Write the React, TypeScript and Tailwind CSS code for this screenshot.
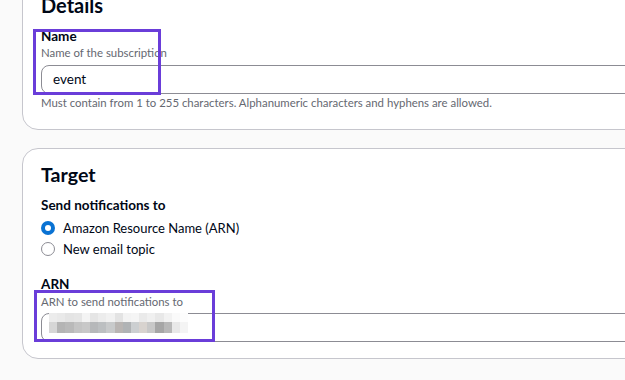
const blur: [string, string][] = [
  ["#ececec", "#d6d6d6"],
  ["#e9e9e9", "#b4b4b4"],
  ["#e4e4e4", "#b9b9b9"],
  ["#e6e6e6", "#c4c4c4"],
  ["#f4f4f4", "#c8c8c8"],
  ["#e5e5e5", "#b6b8ba"],
  ["#ececec", "#bcbfc1"],
  ["#f1f1f1", "#c8cacb"],
  ["#e3e3e3", "#b9b5b3"],
  ["#f3f3f3", "#b0b3b5"],
  ["#f5f5f5", "#cccfd1"],
  ["#eaeaea", "#d8d3cf"],
  ["#f0f0f0", "#c8c8c8"],
  ["#e8e8e8", "#a6a6a6"],
  ["#f2f2f2", "#b8b8b8"],
  ["#fafafa", "#e8e8e8"],
  ["#fdfdfd", "#f4f4f4"],
];

function Radio({ checked, label }: { checked?: boolean; label: string }) {
  return (
    <div className="flex items-center h-[20px]">
      {checked ? (
        <span className="w-[14px] h-[14px] rounded-full bg-[#0972d3] flex items-center justify-center">
          <span className="w-[6px] h-[6px] rounded-full bg-white" />
        </span>
      ) : (
        <span className="w-[14px] h-[14px] rounded-full border-[1.5px] border-[#8c8c94] bg-white" />
      )}
      <span className="ml-[8px] text-[13px] leading-[20px] text-[#000716]">{label}</span>
    </div>
  );
}

export default function App() {
  return (
    <div className="w-[625px] h-[380px] overflow-hidden bg-[#fafafa] font-['Lato',sans-serif]">
      <div className="pl-[22px] mt-[-30px] flex flex-col">
        {/* Details card */}
        <div className="relative w-[720px] bg-white border border-[#c6c6cd] rounded-[16px] pl-[18px] pt-[22px] pb-[18px]">
          <h2 className="text-[20px] leading-[24px] font-bold text-[#000716]">Details</h2>
          <div className="mt-[11px] text-[13.5px] leading-[16px] font-bold text-[#000716]">Name</div>
          <div className="mt-[1px] text-[11.4px] leading-[16px] text-[#656871]">Name of the subscription</div>
          <div className="mt-[4px] h-[29px] border border-[#8c8c94] rounded-[8px] flex items-center pl-[11px] pb-[2px]">
            <span className="text-[13.5px] leading-[20px] text-[#000716]">event</span>
          </div>
          <div className="mt-[1px] text-[11.4px] leading-[16px] text-[#656871]">
            Must contain from 1 to 255 characters. Alphanumeric characters and hyphens are allowed.
          </div>
          <div className="absolute left-[10px] top-[58px] w-[128px] h-[66px] border-[3px] border-[#6a3dd9]" />
        </div>

        {/* Target card */}
        <div className="relative mt-[18px] w-[720px] bg-white border border-[#c6c6cd] rounded-[16px] pl-[18px] pt-[14px] pb-[16px]">
          <h2 className="text-[19.6px] leading-[24px] font-bold text-[#000716]">Target</h2>
          <div className="mt-[10px] text-[13.5px] leading-[16px] font-bold text-[#000716]">Send notifications to</div>
          <div className="mt-[5px] flex flex-col gap-[1px]">
            <Radio checked label="Amazon Resource Name (ARN)" />
            <Radio label="New email topic" />
          </div>
          <div className="mt-[17px] text-[13.5px] leading-[16px] font-bold text-[#000716]">ARN</div>
          <div className="mt-[2px] text-[11.4px] leading-[16px] text-[#656871]">ARN to send notifications to</div>
          <div className="relative mt-[3px] h-[29px] border border-[#8c8c94] rounded-[8px]">
            <div className="absolute left-[7px] top-[-1px] flex">
              {blur.map(([a, b], i) => (
                <div key={i} className="flex flex-col w-[8.2px]">
                  <div className="h-[9px]" style={{ backgroundColor: a }} />
                  <div className="h-[11px]" style={{ backgroundColor: b }} />
                </div>
              ))}
            </div>
          </div>
          <div className="absolute left-[11px] top-[141px] w-[181px] h-[52px] border-[3px] border-[#6a3dd9]" />
        </div>
      </div>
    </div>
  );
}
